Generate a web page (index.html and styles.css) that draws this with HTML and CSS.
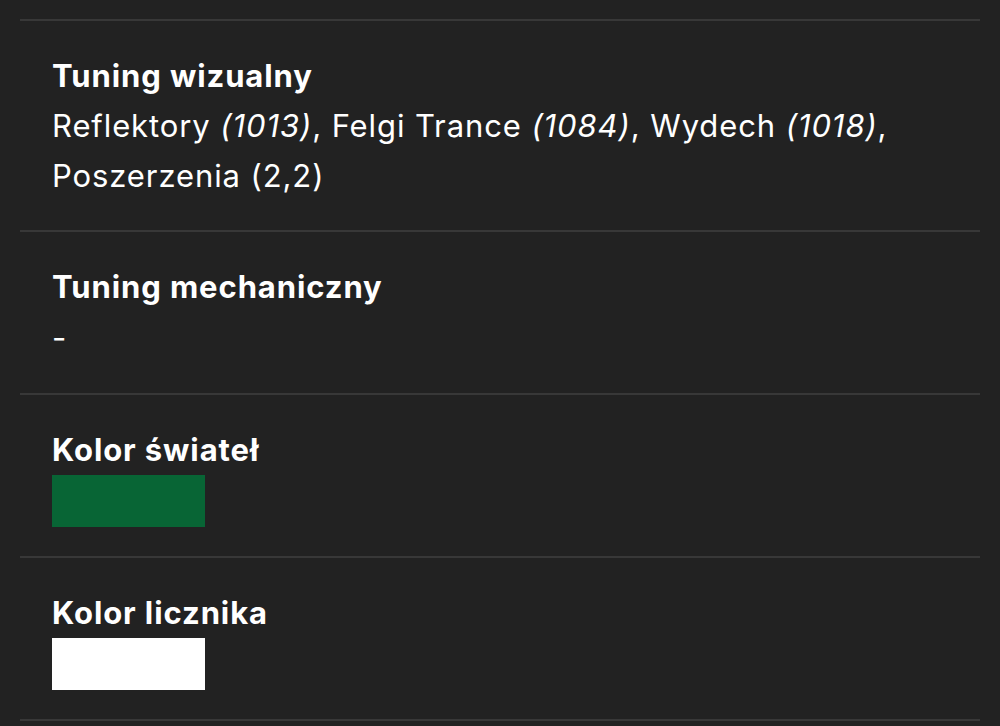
FILE: index.html
```html
<!DOCTYPE html>
<html lang="pl">
<head>
<meta charset="utf-8">
<title>Tuning</title>
<link rel="stylesheet" href="styles.css">
</head>
<body>
<div class="specs">
  <section class="spec">
    <h3 class="spec-title">Tuning wizualny</h3>
    <p class="spec-value">Reflektory <em>(1013)</em>, Felgi Trance <em>(1084)</em>, Wydech <em>(1018)</em>, Poszerzenia (2,2)</p>
  </section>
  <section class="spec">
    <h3 class="spec-title">Tuning mechaniczny</h3>
    <p class="spec-value spec-value-empty">-</p>
  </section>
  <section class="spec">
    <h3 class="spec-title">Kolor świateł</h3>
    <div class="swatch swatch-green"></div>
  </section>
  <section class="spec">
    <h3 class="spec-title">Kolor licznika</h3>
    <div class="swatch swatch-white"></div>
  </section>
</div>
</body>
</html>
```
FILE: styles.css
```css
html, body {
  margin: 0;
  padding: 0;
  background: #222222;
}

body {
  font-family: Inter, "Noto Sans", "Liberation Sans", sans-serif;
  color: #ffffff;
}

.specs {
  padding: 19px 20px 0;
}

.spec {
  border-top: 2px solid #383838;
  padding: 30px 32px 29px 32px;
}

.spec:last-child {
  border-bottom: 2px solid #383838;
}

.spec-title {
  margin: 0;
  font-size: 31px;
  line-height: 50px;
  font-weight: 700;
  letter-spacing: 0.9px;
}

.spec-value {
  margin: 0;
  font-size: 31px;
  line-height: 50px;
  font-weight: 400;
  letter-spacing: 0.9px;
}

.spec-value-empty {
  line-height: 52px;
}

.spec-value em {
  font-style: italic;
}

.swatch {
  width: 153px;
  height: 52px;
}

.swatch-green {
  background: #086535;
}

.swatch-white {
  background: #ffffff;
}
```
